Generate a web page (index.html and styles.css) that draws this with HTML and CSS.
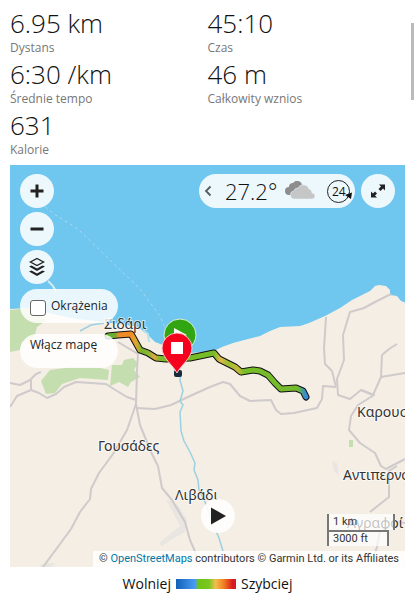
FILE: index.html
```
<!DOCTYPE html>
<html lang="pl">
<head>
    <meta charset="UTF-8">
    <meta name="viewport" content="width=device-width, initial-scale=1.0">
    <title>Aktywność - 6.95 km</title>
    <link rel="stylesheet" href="styles.css">
</head>
<body>
    <main class="activity">
        <dl class="stats">
            <div class="stat"><dd>6.95 km</dd><dt>Dystans</dt></div>
            <div class="stat"><dd>45:10</dd><dt>Czas</dt></div>
            <div class="stat"><dd>6:30 /km</dd><dt>Średnie tempo</dt></div>
            <div class="stat"><dd>46 m</dd><dt>Całkowity wznios</dt></div>
            <div class="stat"><dd>631</dd><dt>Kalorie</dt></div>
        </dl>

        <section class="map">
            <svg class="map-canvas" viewBox="10 165 395 402" preserveAspectRatio="xMinYMin slice" role="img" aria-label="Mapa trasy">
                <defs>
                    <linearGradient id="pace" gradientUnits="userSpaceOnUse" x1="108" y1="0" x2="308" y2="0">
                        <stop offset="0" stop-color="#5fb52c"/>
                        <stop offset="0.04" stop-color="#79a832"/>
                        <stop offset="0.05" stop-color="#e88a2c"/>
                        <stop offset="0.11" stop-color="#f28a22"/>
                        <stop offset="0.14" stop-color="#e0a62f"/>
                        <stop offset="0.17" stop-color="#72b52b"/>
                        <stop offset="0.21" stop-color="#9bb536"/>
                        <stop offset="0.23" stop-color="#e0a83a"/>
                        <stop offset="0.26" stop-color="#7cb92b"/>
                        <stop offset="0.53" stop-color="#74bd25"/>
                        <stop offset="0.56" stop-color="#e5b84a"/>
                        <stop offset="0.60" stop-color="#9cbd31"/>
                        <stop offset="0.65" stop-color="#c5bb3b"/>
                        <stop offset="0.68" stop-color="#77bd28"/>
                        <stop offset="0.95" stop-color="#73b92c"/>
                        <stop offset="0.98" stop-color="#3b94bd"/>
                        <stop offset="1" stop-color="#3d83e0"/>
                    </linearGradient>
                </defs>

                <!-- sea and land -->
                <rect x="10" y="165" width="395" height="402" fill="#6fc6ef"/>
                <path fill="#f4eee4" d="M10 309L28 308L45 312L70 318L95 321L120 324L138 327L148 335L155 342L163 345L172 351L190 353L214 351L222 347L233 343L248 339L260 336L270 331L280 327L300 326L309 323L325 316L340 308L352 300L370 291L375 286L379 285L386 286L390 290L390 295L397 296L401 301L406 303V568H10Z"/>

                <!-- woods -->
                <g fill="#c5deb0">
                    <path d="M10 310L29 308L36 314L47 320L37 327L34 338L22 342L20 350L10 352Z"/>
                    <path d="M50 370L72 367L96 367L109 370L108 380L80 378L62 384L55 393L46 394L41 381Z"/>
                    <path d="M112 365L122 365L124 360L133 358L138 363L134 370L140 377L131 382L128 387L119 382L110 386Z"/>
                    <path d="M349 440h4v7h-4z"/>
                </g>
                <g fill="#e9e6e1">
                    <path d="M166 499L178 505L187 520L185 532L174 538L162 546L159 543L180 526Z"/>
                    <path d="M332 461l5 2 2 13-5-5zM40 565l5-2h10l-3 4H40z"/>
                </g>

                <!-- roads -->
                <g class="roads">
                    <path d="M10 383L20 385L30 380L36 374L41 372"/>
                    <path d="M10 407L17 396L31 390L39 393L47 398L56 394L64 387L76 382L106 384L117 391L127 397L136 400"/>
                    <path d="M31 380V390"/>
                    <path d="M118 342L138 354L137 370L136 404L127 430L113 454L99 473L91 489L90 499L80 512L71 529L60 544L43 567"/>
                    <path d="M136 404L140 425L151 452L158 466L162 488L172 500L185 522L190 540L197 556"/>
                    <path d="M136 408L155 409L171 405L190 396L210 387L223 382L230 384L240 396L250 401L271 400L276 410L281 414L294 413L317 408L322 399L323 386L336 387"/>
                    <path d="M326 317L324 348L325 364L332 371L336 387"/>
                    <path d="M391 294L375 302L364 308L350 312L343 335L344 360L337 379L338 395L350 399L361 390L373 395L381 377L382 355L389 349L397 344"/>
                    <path d="M381 377L405 373"/>
                    <path d="M361 390L374 395L358 405L351 416L349 430L360 443L375 453L381 466L386 469L405 459"/>
                    <path d="M397 466L389 471L389 497L370 512"/>
                    <path d="M380 530L377 547L372 562"/>
                    <path d="M398 522L405 523"/>
                </g>
                <path class="river" d="M181 373L180 380L183 391L180 401L183 405L180 412L181 431L184 441L190 452L195 463L194 470L198 480L199 490L205 502L213 524L219 538L223 551"/>
                <path class="river" d="M80 331L91 325L104 323"/>
                <path d="M22 188L54 214L78 229L140 289L160 316L166 330" fill="none" stroke="#a8d9ee" stroke-dasharray="3 3"/>
                <path d="M48 281q5 4 8 10" fill="none" stroke="#d5ecf5" stroke-width="2"/>
                <path d="M143 330l5 4 1 8" fill="none" stroke="#b7e1ed" stroke-width="2"/>

                <!-- place names -->
                <g class="places">
                    <text x="104" y="329">Σιδάρι</text>
                    <text x="98" y="451">Γουσάδες</text>
                    <text x="175" y="500">Λιβάδι</text>
                    <text x="357" y="417">Καρουσάδες</text>
                    <text x="343" y="480">Αντιπερνοί</text>
                    <text x="347" y="528">Αγραφοί</text>
                </g>

                <!-- recorded route -->
                <path class="route-edge" d="M108 336L118 335L131 334L135 341L140 350L148 353L156 358L166 359L190 358L214 353L219 359L235 367L241 372L253 370L260 371L268 375L275 383L281 389L296 388L303 391L306 397"/>
                <path class="route" d="M108 336L118 335L131 334L135 341L140 350L148 353L156 358L166 359L190 358L214 353L219 359L235 367L241 372L253 370L260 371L268 375L275 383L281 389L296 388L303 391L306 397"/>
                <rect x="174" y="370" width="8" height="7" rx="2" fill="#182b3c"/>

                <!-- start and finish pins -->
                <path d="M180 359C176 351 164 346 164 335a16 16 0 0 1 32 0C196 346 184 351 180 359Z" fill="#32a512" stroke="#d9efcf"/>
                <path d="M174 328L187 335L174 342Z" fill="#fff"/>
                <path d="M177 373C173 365 162 358 162 348a15 15 0 0 1 30 0C192 358 181 365 177 373Z" fill="#f5001d" stroke="#f9c7c7"/>
                <path d="M171 342h12v12h-12z" fill="#fff"/>
            </svg>

            <div class="map-tools">
                <button class="round" aria-label="Powiększ"><svg width="14" height="14" viewBox="0 0 14 14"><path d="M7 0.5v13M0.5 7h13" stroke="#222" stroke-width="3"/></svg></button>
                <button class="round" aria-label="Pomniejsz"><svg width="14" height="14" viewBox="0 0 14 14"><path d="M0.5 7h13" stroke="#222" stroke-width="3"/></svg></button>
                <button class="round" aria-label="Warstwy"><svg width="18" height="20" viewBox="0 0 18 20"><path d="M9 1.500L15.500 5L9 8.500L2.500 5Z" fill="none" stroke="#222" stroke-width="1.400"/><path d="M1 9.500L3.500 8.500L9 11.500L14.500 8.500L17 9.500L9 14ZM1 14.500L3.500 13.500L9 16.500L14.500 13.500L17 14.500L9 19Z" fill="#222"/></svg></button>
                <label class="chip laps"><input type="checkbox"><span>Okrążenia</span></label>
                <button class="chip enable">Włącz mapę</button>
            </div>

            <div class="map-top">
                <div class="weather">
                    <button class="icon-button" aria-label="Zwiń pogodę"><svg width="8" height="12" viewBox="0 0 8 12"><path d="M6.500 1.500L2 6L6.500 10.500" fill="none" stroke="#555b63" stroke-width="1.800"/></svg></button>
                    <span class="temp">27.2°</span>
                    <svg class="clouds" width="32" height="20" viewBox="0 0 32 20">
                        <path d="M4 14a4 4 0 0 1 0-8a4 4 0 0 1 4-4a5 5 0 0 1 9 2L12 14Z" fill="#8d8d8d"/>
                        <path d="M10 18a4 4 0 0 1-1-8a4 4 0 0 1 4-3a6 6 0 0 1 11 1a4 4 0 0 1 3 4a3 3 0 0 1 0 6Z" fill="#c5c6c6" stroke="#edf4f9" stroke-width="0.600"/>
                    </svg>
                    <span class="wind">24<svg width="8" height="8" viewBox="0 0 8 8"><path d="M0 3L7 0.500L6 7Z" fill="#111"/></svg></span>
                </div>
                <button class="round" aria-label="Pełny ekran"><svg width="16" height="16" viewBox="0 0 16 16"><path d="M9 1.500h6V7.500L13 5.500L10.500 8L8.500 6L11 3.500ZM1 8.500L3 10.500L5 8.500L7 10.500L5 12.500L7 14.500H1Z" fill="#222"/></svg></button>
            </div>

            <button class="round play" aria-label="Odtwórz"><svg width="16" height="18" viewBox="0 0 16 18"><path d="M1 0.500L16 9L1 17.500Z" fill="#222"/></svg></button>

            <div class="scale">
                <span class="scale-km">1 km</span>
                <span class="scale-ft">3000 ft</span>
            </div>
            <p class="credits">© <a href="#">OpenStreetMaps</a> contributors © Garmin Ltd. or its Affiliates</p>
        </section>

        <div class="legend">
            <span>Wolniej</span>
            <span class="legend-bar"></span>
            <span>Szybciej</span>
        </div>
    </main>
    <div class="scroll-thumb"></div>
</body>
</html>
```
FILE: styles.css
```
* {
    box-sizing: border-box;
}
body {
    margin: 0;
    background-color: #fff;
    color: #111;
    font-family: "Open Sans", "Noto Sans", sans-serif;
    position: relative;
}
button {
    border: none;
    padding: 0;
    margin: 0;
    font: inherit;
    color: inherit;
    cursor: pointer;
}
.activity {
    padding: 8px 9px 0 10px;
}

/* Summary numbers */
.stats {
    display: grid;
    grid-template-columns: 1fr 1fr;
    row-gap: 3px;
    margin: 0 0 7px;
}
.stat {
    display: flex;
    flex-direction: column;
}
.stat dd {
    margin: 0;
    font-size: 26px;
    font-weight: 300;
    line-height: 31px;
}
.stat dt {
    font-size: 12px;
    line-height: 17px;
    color: #777;
}

/* Map */
.map {
    position: relative;
    height: 402px;
    overflow: hidden;
    background-color: #f4eee4;
}
.map-canvas {
    display: block;
    width: 100%;
    height: 100%;
}
.roads {
    fill: none;
    stroke: #cfcacb;
    stroke-width: 2;
    stroke-linejoin: round;
}
.river {
    fill: none;
    stroke: #9dd0e0;
    stroke-width: 1.5;
    stroke-linejoin: round;
}
.places {
    font-family: "Noto Sans", sans-serif;
    font-size: 14px;
    fill: #333;
    stroke: #fff;
    stroke-width: 2;
    stroke-opacity: 0.6;
    paint-order: stroke;
}
.route,
.route-edge {
    fill: none;
    stroke-linecap: round;
    stroke-linejoin: round;
}
.route-edge {
    stroke: #111;
    stroke-width: 7;
}
.route {
    stroke: url(#pace);
    stroke-width: 5;
}

/* Controls over the map */
.round {
    display: flex;
    align-items: center;
    justify-content: center;
    width: 34px;
    height: 34px;
    border-radius: 50%;
    background-color: rgba(255, 255, 255, 0.88);
}
.map-tools {
    position: absolute;
    top: 9px;
    left: 10px;
    display: flex;
    flex-direction: column;
    align-items: flex-start;
    gap: 4px;
}
.chip {
    display: flex;
    width: 98px;
    height: 34px;
    padding: 0 10px;
    border-radius: 17px;
    background-color: rgba(255, 255, 255, 0.85);
    font-size: 12px;
    line-height: 18px;
    color: #222;
}
.laps {
    gap: 5px;
    margin-top: 1px;
    padding-top: 8px;
}
.laps input {
    flex: none;
    appearance: none;
    width: 16px;
    height: 16px;
    margin: 3px 0 0;
    border: 1px solid #666;
    border-radius: 3px;
    background-color: #fff;
}
.laps input:checked {
    background-color: #1976d2;
}
.enable {
    margin-top: 7px;
    padding-top: 2px;
    white-space: nowrap;
}
.map-top {
    position: absolute;
    top: 9px;
    right: 10px;
    display: flex;
    gap: 6px;
}
.weather {
    display: flex;
    align-items: center;
    width: 156px;
    height: 34px;
    padding-left: 5px;
    border-radius: 17px;
    background-color: rgba(255, 255, 255, 0.88);
}
.icon-button {
    display: flex;
    background: none;
}
.temp {
    margin-left: 13px;
    font-size: 22px;
    font-weight: 300;
    line-height: 34px;
}
.clouds {
    margin-left: 8px;
}
.wind {
    position: relative;
    width: 23px;
    height: 23px;
    margin-left: 10px;
    border: 1px solid #222;
    border-radius: 50%;
    font-size: 12px;
    line-height: 21px;
    text-align: center;
}
.wind svg {
    position: absolute;
    right: -4px;
    bottom: 2px;
}
.play {
    position: absolute;
    left: 191px;
    bottom: 34px;
}
.scale {
    position: absolute;
    right: 10px;
    bottom: 21px;
    width: 68px;
    font-family: Roboto, sans-serif;
    font-size: 11px;
    line-height: 16px;
    color: #333;
}
.scale span {
    display: block;
    padding-left: 4px;
    border: 2px solid #777;
    background-color: rgba(255, 255, 255, 0.7);
}
.scale .scale-km {
    border-top: none;
    border-bottom: none;
}
.scale .scale-ft {
    width: 62px;
    border-bottom: none;
    line-height: 14px;
}
.credits {
    position: absolute;
    right: 0;
    bottom: 0;
    margin: 0;
    padding: 0 6px;
    background-color: rgba(255, 255, 255, 0.85);
    font-family: Roboto, sans-serif;
    font-size: 11px;
    line-height: 16px;
    color: #333;
    white-space: nowrap;
}
.credits a {
    color: #0078a8;
    text-decoration: none;
}

/* Pace legend */
.legend {
    display: flex;
    align-items: center;
    justify-content: center;
    gap: 5px;
    padding-top: 6px;
    font-size: 14px;
    line-height: 22px;
}
.legend-bar {
    width: 60px;
    height: 10px;
    background: linear-gradient(to right, #1160b7, #4a9df5 33%, #6fc118 36%, #79c720 55%, #f3bd4e 66%, #f07c1f 80%, #d91a22 94%);
}
.scroll-thumb {
    position: absolute;
    top: 23px;
    right: 0;
    width: 3px;
    height: 77px;
    background-color: #bbb;
}
```
